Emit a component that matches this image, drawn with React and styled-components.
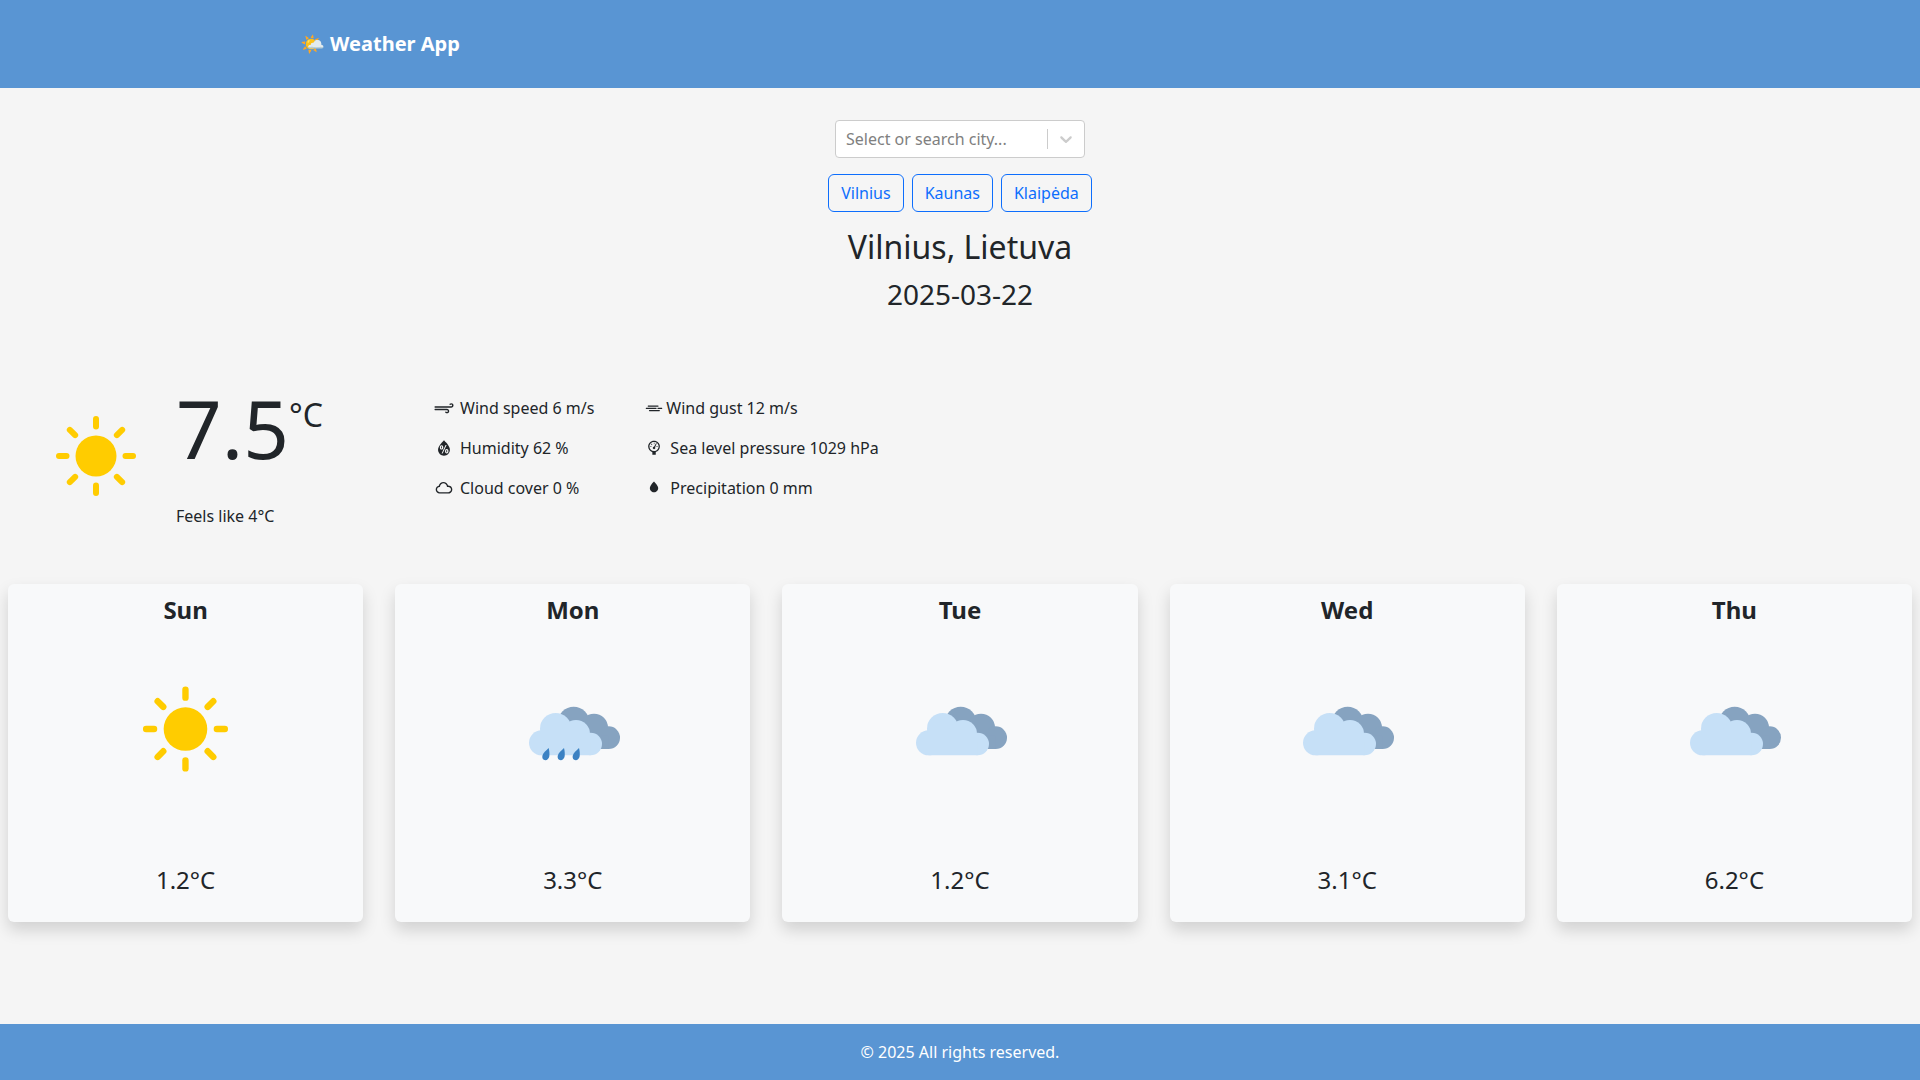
import React, { useState } from "react";
import styled, { createGlobalStyle } from "styled-components";
import { WiStrongWind, WiWindy, WiHumidity, WiBarometer, WiCloud, WiRaindrop } from "react-icons/wi";

const GlobalStyle = createGlobalStyle`
  *, *::before, *::after { box-sizing: border-box; }
  body {
    margin: 0;
    background: #f5f5f5;
    color: #212529;
    font-family: "Noto Sans", "Liberation Sans", "Noto Color Emoji", sans-serif;
    font-size: 16px;
    line-height: 24px;
  }
  h1, h2, h3, p, ul { margin: 0; padding: 0; }
`;

const Page = styled.div`
  display: flex;
  flex-direction: column;
  min-height: 100vh;
`;

const Header = styled.header`
  background: #5995d3;
  padding: 24px 0;
`;

const HeaderInner = styled.div`
  width: 100%;
  max-width: 1320px;
  margin: 0 auto;
`;

const Brand = styled.a`
  display: inline-block;
  padding: 5px 0;
  color: #fff;
  font-size: 20px;
  line-height: 30px;
  font-weight: 700;
  text-decoration: none;
`;

const Main = styled.main`
  flex: 1;
  padding-top: 32px;
`;

const Search = styled.section`
  display: flex;
  flex-direction: column;
  align-items: center;
  gap: 16px;
`;

const SearchBox = styled.div`
  display: flex;
  width: 250px;
  height: 38px;
  background: #fff;
  border: 1px solid #ccc;
  border-radius: 4px;
`;

const SearchInput = styled.input`
  flex: 1;
  min-width: 0;
  padding: 0 10px;
  border: 0;
  outline: 0;
  background: transparent;
  color: #333;
  font: inherit;
  &::placeholder { color: #808080; opacity: 1; }
`;

const Separator = styled.span`
  width: 1px;
  margin: 8px 0;
  background: #ccc;
`;

const SearchToggle = styled.button`
  display: flex;
  padding: 8px;
  border: 0;
  background: transparent;
  color: #ccc;
`;

const CityList = styled.div`
  display: flex;
  gap: 8px;
`;

const CityButton = styled.button`
  padding: 6px 12px;
  border: 1px solid #0d6efd;
  border-radius: 6px;
  background: transparent;
  color: #0d6efd;
  font: inherit;
  cursor: pointer;
`;

const Place = styled.div`
  display: flex;
  flex-direction: column;
  gap: 8px;
  text-align: center;
`;

const PlaceName = styled.h2`
  font-size: 32px;
  line-height: 38px;
  font-weight: 400;
`;

const PlaceDate = styled.h3`
  font-size: 28px;
  line-height: 40px;
  font-weight: 400;
`;

const Current = styled.section`
  display: flex;
  padding: 66px 16px 52px;
`;

const CurrentIcon = styled.div`
  display: flex;
  align-items: center;
  justify-content: center;
  width: 160px;
`;

const Reading = styled.div`
  display: flex;
  flex-direction: column;
  gap: 28px;
  width: 256px;
`;

const Temperature = styled.p`
  display: flex;
  font-size: 80px;
  line-height: 96px;
`;

const Unit = styled.span`
  padding-top: 16px;
  font-size: 32px;
  line-height: 38px;
`;

const Stats = styled.div`
  display: flex;
  gap: 48px;
  padding-top: 16px;
`;

const StatList = styled.ul`
  display: flex;
  flex-direction: column;
  gap: 16px;
  list-style: none;
`;

const Stat = styled.li`
  display: flex;
  align-items: center;
  gap: ${(p) => (p.$tight ? "0" : "4px")};
`;

const Forecast = styled.section`
  display: grid;
  grid-template-columns: repeat(5, 1fr);
  gap: 32px;
  padding: 0 8px;
`;

const Card = styled.article`
  display: flex;
  flex-direction: column;
  align-items: center;
  padding: 8px 0 24px;
  border-radius: 6px;
  background: #f8f9fa;
  box-shadow: 0 8px 16px rgba(0, 0, 0, 0.15);
  font-size: 24px;
  line-height: 36px;
`;

const Day = styled.h3`
  font-size: 24px;
  font-weight: 700;
`;

const Art = styled.svg`
  display: block;
  width: ${(p) => p.$size}px;
  height: ${(p) => p.$size}px;
`;

const DayTemp = styled.p`
  margin-top: 34px;
`;

const Footer = styled.footer`
  padding: 16px;
  background: #5995d3;
  color: #fff;
  text-align: center;
`;

function SunShapes() {
  return (
    <g fill="#fc0" stroke="#fc0" strokeLinecap="round">
      <circle r="20.5" stroke="none" />
      {[0, 45, 90, 135, 180, 225, 270, 315].map((angle) => (
        <line key={angle} y1="-37" y2="-29.5" strokeWidth="6" transform={`rotate(${angle})`} />
      ))}
    </g>
  );
}

function CloudShape({ fill, ...rest }) {
  return (
    <g fill={fill} {...rest}>
      <circle cx="115.5" cy="188.5" r="37.5" />
      <circle cx="158" cy="146" r="47" />
      <circle cx="219" cy="162" r="42" />
      <circle cx="263" cy="192" r="34" />
      <path d="M115 151H240V185H263V226H115Z" />
    </g>
  );
}

function WeatherArt({ kind }) {
  if (kind === "sun") {
    return (
      <Art $size={200} viewBox="-93.5 -95 188 188" aria-hidden="true">
        <SunShapes />
      </Art>
    );
  }
  return (
    <Art $size={200} viewBox="-90 -156 600 600" aria-hidden="true">
      <CloudShape fill="#86a3c0" transform="translate(54 -19)" />
      <CloudShape fill="#c6e0f7" />
      {kind === "rain" &&
        [0, 46, 91].map((x) => (
          <path
            key={x}
            transform={`translate(${x} 0)`}
            fill="#3c82c3"
            d="M137 204C139 212 140 220 139 229C138 236 133 241 127 241C120 240 117 235 118 228C120 218 129 212 137 204Z"
          />
        ))}
    </Art>
  );
}

const cities = ["Vilnius", "Kaunas", "Klaipėda"];

const stats = [
  [
    { Icon: WiStrongWind, text: "Wind speed 6 m/s" },
    { Icon: WiHumidity, text: "Humidity 62 %" },
    { Icon: WiCloud, text: "Cloud cover 0 %" },
  ],
  [
    { Icon: WiWindy, text: "Wind gust 12 m/s", tight: true },
    { Icon: WiBarometer, text: "Sea level pressure 1029 hPa" },
    { Icon: WiRaindrop, text: "Precipitation 0 mm" },
  ],
];

const forecast = [
  { day: "Sun", kind: "sun", temp: "1.2°C" },
  { day: "Mon", kind: "rain", temp: "3.3°C" },
  { day: "Tue", kind: "cloud", temp: "1.2°C" },
  { day: "Wed", kind: "cloud", temp: "3.1°C" },
  { day: "Thu", kind: "cloud", temp: "6.2°C" },
];

export default function App() {
  const [city, setCity] = useState("Vilnius");
  const [query, setQuery] = useState("");

  return (
    <>
      <GlobalStyle />
      <Page>
        <Header>
          <HeaderInner>
            <Brand href="#">🌤️ Weather App</Brand>
          </HeaderInner>
        </Header>

        <Main>
          <Search>
            <SearchBox>
              <SearchInput
                aria-label="City"
                placeholder="Select or search city..."
                value={query}
                onChange={(e) => setQuery(e.target.value)}
              />
              <Separator />
              <SearchToggle type="button" aria-label="Show cities">
                <svg width="20" height="20" viewBox="0 0 20 20" fill="currentColor" aria-hidden="true">
                  <path d="M4.516 7.548c0.436-0.446 1.043-0.481 1.576 0l3.908 3.747 3.908-3.747c0.533-0.481 1.141-0.446 1.574 0 0.436 0.445 0.408 1.197 0 1.615-0.406 0.418-4.695 4.502-4.695 4.502-0.217 0.223-0.502 0.335-0.787 0.335s-0.57-0.112-0.789-0.335c0 0-4.287-4.084-4.695-4.502s-0.436-1.17 0-1.615z" />
                </svg>
              </SearchToggle>
            </SearchBox>
            <CityList>
              {cities.map((name) => (
                <CityButton key={name} type="button" onClick={() => setCity(name)}>
                  {name}
                </CityButton>
              ))}
            </CityList>
            <Place>
              <PlaceName>{city}, Lietuva</PlaceName>
              <PlaceDate>2025-03-22</PlaceDate>
            </Place>
          </Search>

          <Current>
            <CurrentIcon>
              <Art $size={152} viewBox="-76 -76 152 152" aria-hidden="true">
                <SunShapes />
              </Art>
            </CurrentIcon>
            <Reading>
              <Temperature>
                7.5<Unit>°C</Unit>
              </Temperature>
              <p>Feels like 4°C</p>
            </Reading>
            <Stats>
              {stats.map((list, i) => (
                <StatList key={i}>
                  {list.map(({ Icon, text, tight }) => (
                    <Stat key={text} $tight={tight}>
                      <Icon size={24} aria-hidden="true" />
                      <span>{text}</span>
                    </Stat>
                  ))}
                </StatList>
              ))}
            </Stats>
          </Current>

          <Forecast>
            {forecast.map(({ day, kind, temp }) => (
              <Card key={day}>
                <Day>{day}</Day>
                <WeatherArt kind={kind} />
                <DayTemp>{temp}</DayTemp>
              </Card>
            ))}
          </Forecast>
        </Main>

        <Footer>© 2025 All rights reserved.</Footer>
      </Page>
    </>
  );
}
